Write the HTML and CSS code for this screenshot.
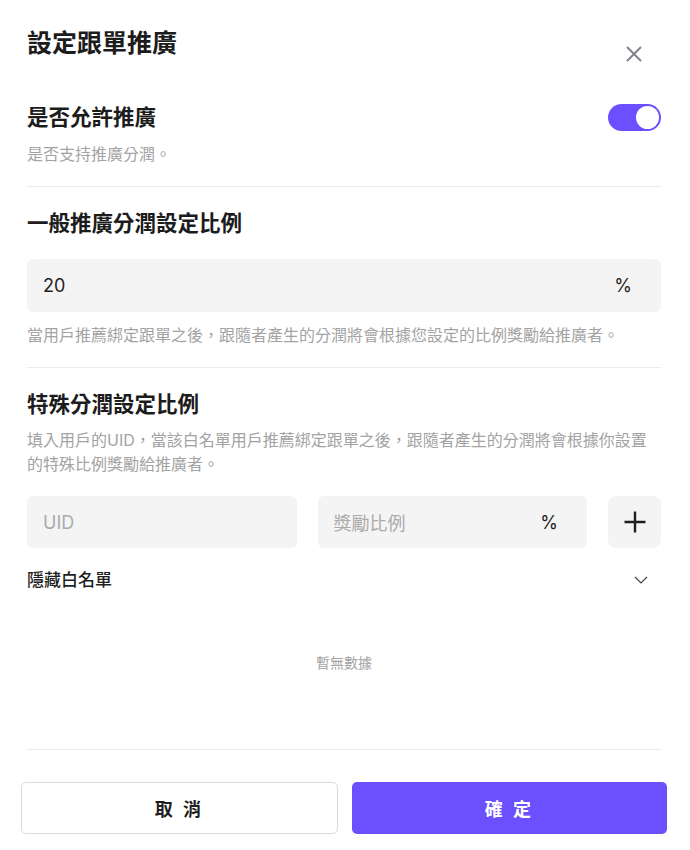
FILE: index.html
```html
<!DOCTYPE html>
<html lang="zh-Hant">
<head>
    <meta charset="UTF-8">
    <meta name="viewport" content="width=device-width, initial-scale=1.0">
    <title>設定跟單推廣</title>
    <link rel="stylesheet" href="styles.css">
</head>
<body>
    <div class="modal">
        <!-- Header -->
        <div class="modal-header">
            <h2>設定跟單推廣</h2>
            <button class="close-btn" aria-label="關閉">
                <svg width="16" height="16" viewBox="0 0 16 16">
                    <path d="M1.5 1.5 L14.5 14.5 M14.5 1.5 L1.5 14.5" stroke="#80848f" stroke-width="2" stroke-linecap="round"/>
                </svg>
            </button>
        </div>

        <div class="modal-body">
            <!-- Allow promotion -->
            <div class="row-between">
                <div class="section-title">是否允許推廣</div>
                <div class="switch on"><span class="knob"></span></div>
            </div>
            <p class="hint hint-top">是否支持推廣分潤。</p>

            <div class="divider"></div>

            <!-- General ratio -->
            <div class="section-title">一般推廣分潤設定比例</div>
            <div class="input-box full">
                <span class="value">20</span>
                <span class="unit">%</span>
            </div>
            <p class="hint hint-after-input">當用戶推薦綁定跟單之後，跟隨者產生的分潤將會根據您設定的比例獎勵給推廣者。</p>

            <div class="divider"></div>

            <!-- Special ratio -->
            <div class="section-title">特殊分潤設定比例</div>
            <p class="hint hint-desc">填入用戶的UID，當該白名單用戶推薦綁定跟單之後，跟隨者產生的分潤將會根據你設置的特殊比例獎勵給推廣者。</p>

            <div class="special-row">
                <div class="input-box">
                    <span class="placeholder">UID</span>
                </div>
                <div class="input-box">
                    <span class="placeholder">獎勵比例</span>
                    <span class="unit">%</span>
                </div>
                <button class="add-btn" aria-label="新增">
                    <svg width="22" height="22" viewBox="0 0 22 22">
                        <path d="M11 0.5 V21.5 M0.5 11 H21.5" stroke="#1f1f1f" stroke-width="2.4"/>
                    </svg>
                </button>
            </div>

            <div class="row-between whitelist-toggle">
                <div class="whitelist-title">隱藏白名單</div>
                <svg class="chevron" width="14" height="8" viewBox="0 0 14 8">
                    <path d="M1 1 L7 7 L13 1" fill="none" stroke="#444" stroke-width="1.2"/>
                </svg>
            </div>

            <div class="empty">暫無數據</div>

            <div class="divider bottom"></div>
        </div>

        <!-- Footer -->
        <div class="modal-footer">
            <button class="btn btn-cancel">取 消</button>
            <button class="btn btn-confirm">確 定</button>
        </div>
    </div>
</body>
</html>
```

FILE: styles.css
```css
/* Global styles */
body {
    margin: 0;
    padding: 0;
    background-color: #ffffff;
    font-family: "Inter", "Noto Sans CJK TC", sans-serif;
    color: #1f1f1f;
}

button {
    font-family: inherit;
    cursor: pointer;
}

.modal {
    width: 690px;
    height: 850px;
    background-color: #ffffff;
}

/* Header */
.modal-header {
    display: flex;
    justify-content: space-between;
    align-items: flex-start;
    padding: 27px 29px 0 27px;
    margin-bottom: 41px;
}

.modal-header h2 {
    margin: 0;
    font-size: 25px;
    line-height: 32px;
    font-weight: 700;
    color: #1c1c1c;
}

.close-btn {
    border: none;
    background: none;
    padding: 0;
    width: 16px;
    height: 16px;
    margin-top: 19px;
    margin-right: 19px;
    display: flex;
}

/* Body */
.modal-body {
    padding: 0 29px 0 27px;
}

.row-between {
    display: flex;
    justify-content: space-between;
    align-items: center;
}

.section-title {
    font-size: 21.5px;
    line-height: 28px;
    font-weight: 700;
    color: #1c1c1c;
}

.hint {
    margin: 0;
    font-size: 16px;
    line-height: 24px;
    color: #a3a3a3;
}

.hint-top {
    margin-top: 11px;
}

.hint-after-input {
    margin-top: 11px;
}

.hint-desc {
    margin-top: 10px;
    max-width: 626px;
}

.divider {
    height: 1px;
    background-color: #ebebeb;
    margin: 20px 0 22px 0;
}

.divider.bottom {
    margin: 0;
}

/* Switch */
.switch {
    width: 53px;
    height: 27px;
    border-radius: 14px;
    background-color: #6c50ff;
    display: flex;
    align-items: center;
    justify-content: flex-end;
    padding: 0 2px;
    box-sizing: border-box;
}

.switch .knob {
    width: 23px;
    height: 23px;
    border-radius: 50%;
    background-color: #ffffff;
}

/* Inputs */
.input-box {
    flex: 1;
    height: 52px;
    background-color: #f4f4f4;
    border-radius: 6px;
    display: flex;
    align-items: center;
    justify-content: space-between;
    padding: 0 29px 0 16px;
    box-sizing: border-box;
    font-size: 18px;
}

.input-box.full {
    height: 53px;
    margin-top: 22px;
}

.value {
    color: #1f1f1f;
}

.placeholder {
    color: #ababab;
}

.unit {
    color: #1f1f1f;
}

.special-row {
    display: flex;
    gap: 21px;
    margin-top: 20px;
}

.add-btn {
    width: 53px;
    height: 52px;
    border: none;
    border-radius: 8px;
    background-color: #f4f4f4;
    display: flex;
    align-items: center;
    justify-content: center;
    padding: 0;
}

/* Whitelist */
.whitelist-toggle {
    margin-top: 20px;
}

.whitelist-title {
    font-size: 17px;
    line-height: 24px;
    font-weight: 500;
    color: #1f1f1f;
}

.chevron {
    margin-right: 13px;
}

.empty {
    text-align: center;
    font-size: 14px;
    line-height: 20px;
    color: #a3a3a3;
    padding: 61px 0 76px 0;
}

/* Footer */
.modal-footer {
    display: flex;
    gap: 14px;
    padding: 32px 23px 0 21px;
}

.btn {
    flex: 1;
    height: 52px;
    border-radius: 5px;
    font-size: 18px;
    font-weight: 700;
    letter-spacing: 3px;
}

.btn-cancel {
    background-color: #ffffff;
    border: 1px solid #dcdcdc;
    color: #1f1f1f;
}

.btn-confirm {
    background-color: #6c50ff;
    border: none;
    color: #ffffff;
}
```
